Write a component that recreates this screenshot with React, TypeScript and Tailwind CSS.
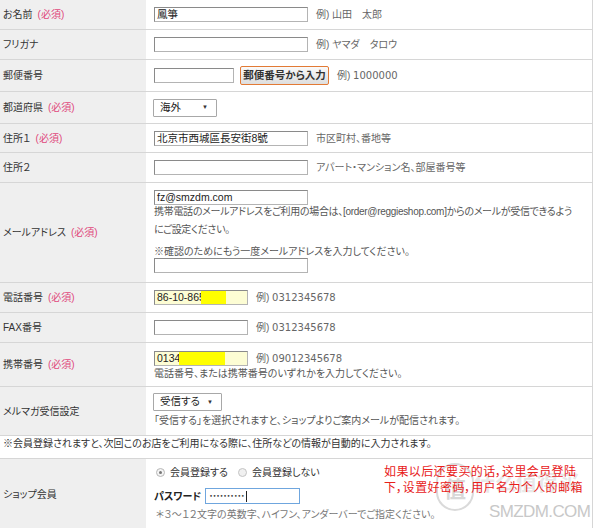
import type { ReactNode } from 'react';

const BASE = "font-['Liberation_Sans','Noto_Sans_CJK_JP',sans-serif] [font-feature-settings:'palt']";
const NUM = "font-['DejaVu_Sans','Noto_Sans_CJK_JP',sans-serif]";

function Row({
  label,
  req,
  h,
  children,
  pad = 'justify-center',
}: {
  label: string;
  req?: boolean;
  h: string;
  children: ReactNode;
  pad?: string;
}) {
  return (
    <div className={`flex border-b border-[#d6d6d6] ${h}`}>
      <div className="flex w-[146px] shrink-0 items-center bg-[#efefef] pl-[3px] text-[10px] text-[#333]">
        {label}
        {req && <span className="ml-[5px] text-[#e0487c]">(必須)</span>}
      </div>
      <div className={`flex flex-1 flex-col pl-[8px] ${pad}`}>{children}</div>
    </div>
  );
}

function Field({ w, value, bg = 'bg-white', children }: { w: string; value?: string; bg?: string; children?: ReactNode }) {
  return (
    <div
      className={`flex h-[15px] shrink-0 items-center overflow-hidden border border-[#b4b4b4] border-l-[#8a8a8a] border-t-[#8a8a8a] px-[2px] text-[10.5px] leading-none text-[#222] ${bg} ${w}`}
    >
      {value}
      {children}
    </div>
  );
}

function Example({ children }: { children: ReactNode }) {
  return <span className="ml-[8px] text-[10px] text-[#666]">{children}</span>;
}

function Select({ w, value }: { w: string; value: string }) {
  return (
    <div
      className={`flex h-[18px] items-center justify-between rounded-[1px] border border-[#a8a8a8] bg-white pl-[6px] pr-[8px] text-[10.5px] text-[#222] ${w}`}
    >
      <span>{value}</span>
      <span className="text-[6px] text-[#333]">▼</span>
    </div>
  );
}

export default function App() {
  return (
    <div className={`relative w-[593px] overflow-hidden border-r border-[#d6d6d6] bg-white ${BASE}`}>
      <Row label="お名前" req h="h-[30px]">
        <div className="flex items-center">
          <Field w="w-[154px]" value="鳳箏" />
          <Example>例) 山田　太郎</Example>
        </div>
      </Row>

      <Row label="フリガナ" h="h-[30px]">
        <div className="flex items-center">
          <Field w="w-[154px]" />
          <Example>例) ヤマダ　タロウ</Example>
        </div>
      </Row>

      <Row label="郵便番号" h="h-[32px]">
        <div className="flex items-center">
          <Field w="w-[80px]" />
          <div className="ml-[6px] flex h-[19px] w-[89px] items-center justify-center rounded-[2px] border border-[#e27a35] bg-gradient-to-b from-[#fafafa] to-[#dedede] text-[10.5px] font-bold text-[#333]">
            郵便番号から入力
          </div>
          <span className="ml-[8px] text-[10px] text-[#666]">
            例) <span className={NUM}>1000000</span>
          </span>
        </div>
      </Row>

      <Row label="都道府県" req h="h-[32px]">
        <div className="-ml-[1px]">
          <Select w="w-[64px]" value="海外" />
        </div>
      </Row>

      <Row label="住所１" req h="h-[29px]">
        <div className="flex items-center">
          <Field w="w-[154px]" value="北京市西城區長安街8號" />
          <Example>市区町村、番地等</Example>
        </div>
      </Row>

      <Row label="住所２" h="h-[30px]">
        <div className="flex items-center">
          <Field w="w-[154px]" value="" />
          <Example>アパート・マンション名、部屋番号等</Example>
        </div>
      </Row>

      <Row label="メールアドレス" req h="h-[100px]" pad="justify-start pt-[7px]">
        <Field w="w-[154px]" value="fz@smzdm.com" />
        <p className="-mt-[2px] whitespace-nowrap text-[10px] leading-[18px] tracking-[-0.3px] text-[#555]">
          携帯電話のメールアドレスをご利用の場合は、[order@reggieshop.com]からのメールが受信できるよう
          <br />
          にご設定ください。
        </p>
        <p className="mt-[6px] text-[10px] leading-[14px] text-[#555]">※確認のためにもう一度メールアドレスを入力してください。</p>
        <div className="mt-[-1px]">
          <Field w="w-[154px]" />
        </div>
      </Row>

      <Row label="電話番号" req h="h-[30px]">
        <div className="flex items-center">
          <Field w="w-[94px]" bg="bg-[#fdfdd4]">
            <span>86-10-865</span>
            <span className="-ml-[4px] h-full w-[25px] shrink-0 bg-[#ffff00]" />
          </Field>
          <span className="ml-[8px] text-[10px] text-[#666]">
            例) <span className={NUM}>0312345678</span>
          </span>
        </div>
      </Row>

      <Row label="FAX番号" h="h-[30px]">
        <div className="flex items-center">
          <Field w="w-[94px]" />
          <span className="ml-[8px] text-[10px] text-[#666]">
            例) <span className={NUM}>0312345678</span>
          </span>
        </div>
      </Row>

      <Row label="携帯番号" req h="h-[44px]" pad="justify-start pt-[8px]">
        <div className="flex items-center">
          <Field w="w-[94px]" bg="bg-[#fdfdd4]">
            <span>0134</span>
            <span className="-ml-[1px] h-full w-[46px] shrink-0 bg-[#ffff00]" />
          </Field>
          <span className="ml-[8px] text-[10px] text-[#666]">
            例) <span className={NUM}>09012345678</span>
          </span>
        </div>
        <p className="mt-[1px] text-[10px] leading-[14px] text-[#555]">電話番号、または携帯番号のいずれかを入力してください。</p>
      </Row>

      <Row label="メルマガ受信設定" h="h-[49px]" pad="justify-start pt-[6px]">
        <div className="-ml-[1px]">
          <Select w="w-[69px]" value="受信する" />
        </div>
        <p className="mt-[3px] text-[10px] leading-[14px] text-[#555]">「受信する」を選択されますと、ショップよりご案内メールが配信されます。</p>
      </Row>

      <div className="h-[23px] border-b border-[#d6d6d6] pl-[3px] pt-[1px] text-[10px] leading-[14px] text-[#333]">
        ※会員登録されますと、次回このお店をご利用になる際に、住所などの情報が自動的に入力されます。
      </div>

      <div className="flex h-[80px]">
        <div className="flex w-[146px] shrink-0 items-start bg-[#efefef] pl-[3px] pt-[28px] text-[10px] text-[#333]">
          ショップ会員
        </div>
        <div className="flex flex-1 flex-col pl-[10px] pt-[6px] text-[10px] text-[#333]">
          <div className="flex items-center">
            <span className="flex h-[9px] w-[9px] items-center justify-center rounded-full border border-[#b8b8b8] bg-[#f4f4f4]">
              <span className="h-[3px] w-[3px] rounded-full bg-[#777]" />
            </span>
            <span className="ml-[5px]">会員登録する</span>
            <span className="ml-[10px] h-[9px] w-[9px] rounded-full border border-[#c4c4c4] bg-[#f0f0f0]" />
            <span className="ml-[5px]">会員登録しない</span>
          </div>
          <div className="mt-[8px] -ml-[2px] flex items-center">
            <span className="font-bold text-[#222]">パスワード</span>
            <div className="ml-[4px] flex h-[16px] w-[95px] items-center border border-[#6fa6de] bg-white px-[3px]">
              <span className={`${NUM} text-[6px] leading-none text-[#333]`}>••••••••••</span>
              <span className="ml-[1px] h-[11px] w-[1px] bg-[#222]" />
            </div>
          </div>
          <p className="mt-[4px] text-[10px] leading-[14px] text-[#777]">＊３～１２文字の英数字、ハイフン、アンダーバーでご指定ください。</p>
        </div>
      </div>

      <div className="pointer-events-none absolute left-[436px] top-[463px] flex h-[48px] w-[38px] items-center justify-center rounded-full border-[2px] border-[#dadada] font-['Noto_Sans_CJK_SC',sans-serif] text-[22px] font-bold text-[#d8d8d8]">
        值
      </div>
      <div className="pointer-events-none absolute left-[474px] top-[466px] font-['Noto_Sans_CJK_SC',sans-serif] text-[21px] font-bold text-[#dedede]/70">
        什么值得买
      </div>
      <div className="pointer-events-none absolute left-[489px] top-[499px] font-['Liberation_Sans',sans-serif] text-[17px] tracking-[-0.6px] text-[#c8c8c8]">
        SMZDM.COM
      </div>

      <div className="absolute left-[384px] top-[463px] font-['Noto_Sans_CJK_SC',sans-serif] text-[12px] leading-[16px] tracking-[0.4px] text-[#e8201a]">
        如果以后还要买的话，这里会员登陆
        <br />
        下，设置好密码，用户名为个人的邮箱
      </div>
    </div>
  );
}
